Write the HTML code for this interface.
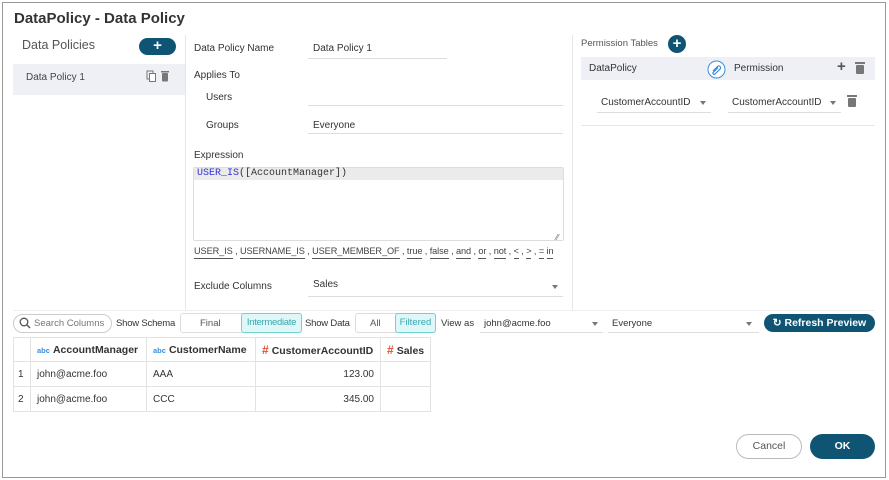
<!DOCTYPE html>
<html><head><style>
*{box-sizing:border-box;margin:0;padding:0}
body{width:889px;height:480px;background:#fff;font-family:"Liberation Sans",sans-serif;color:#333;position:relative;overflow:hidden;font-size:10px}
.a{position:absolute;white-space:nowrap}
.ul{position:absolute;height:1px;background:#ddd}
.btn{position:absolute;background:#0f5573;color:#fff;border-radius:12px;text-align:center;font-weight:bold}
.arr{position:absolute;width:0;height:0;border-left:3.5px solid transparent;border-right:3.5px solid transparent;border-top:4px solid #777}
.kwl{position:absolute;left:194px;top:244px;font-size:9.2px;color:#444;line-height:14px;white-space:nowrap;letter-spacing:-0.1px}
.kwl u{text-decoration:none;border-bottom:1px solid #555;display:inline-block}
table{position:absolute;left:13px;top:337px;border-collapse:collapse;font-size:10px}
td{border:1px solid #e3e3e3;height:25px;padding:0 6px}
th{border:1px solid #e3e3e3;height:24px;padding:0 6px;text-align:left;font-size:10.5px}
.abc{color:#3a8fd8;font-size:7.5px;font-weight:bold;margin-right:3px}
.hash{color:#e8502a;font-weight:bold;font-size:12px;margin-right:3px}
.t{font-size:9.5px}
</style></head><body>
<div class="a" style="left:2px;top:2px;width:884px;height:476px;border:1px solid #999"></div>
<div class="a" style="left:14px;top:10px;font-size:15px;font-weight:bold;color:#333">DataPolicy - Data Policy</div>

<div class="a" style="left:22px;top:38px;font-size:12.5px;color:#555">Data Policies</div>
<div class="btn" style="left:139px;top:38px;width:37px;height:17px;font-size:15px;line-height:16px">+</div>
<div class="a" style="left:13px;top:64px;width:172px;height:31px;background:#eef0f5"></div>
<div class="a" style="left:26px;top:72px;font-size:10px;color:#444">Data Policy 1</div>
<svg class="a" style="left:146px;top:70px" width="26" height="13" viewBox="0 0 26 13"><rect x="1" y="1" width="6" height="8" fill="none" stroke="#777" stroke-width="1"/><rect x="3.5" y="3.5" width="6" height="8" fill="#fff" stroke="#777" stroke-width="1"/><rect x="15" y="1" width="8" height="1.5" fill="#777"/><rect x="16" y="3" width="6" height="8.5" rx="1" fill="#777"/></svg>
<div class="a" style="left:185px;top:35px;width:1px;height:275px;background:#e6e6e6"></div>

<div class="a" style="left:194px;top:43px">Data Policy Name</div>
<div class="a" style="left:313px;top:43px">Data Policy 1</div><div class="ul" style="left:308px;top:58px;width:139px"></div>
<div class="a" style="left:194px;top:70px">Applies To</div>
<div class="a" style="left:206px;top:92px">Users</div><div class="ul" style="left:308px;top:105px;width:255px"></div>
<div class="a" style="left:206px;top:120px">Groups</div>
<div class="a" style="left:313px;top:120px">Everyone</div><div class="ul" style="left:308px;top:133px;width:255px"></div>
<div class="a" style="left:194px;top:150px">Expression</div>
<div class="a" style="left:193px;top:167px;width:371px;height:74px;border:1px solid #ddd;border-radius:2px"></div>
<div class="a" style="left:194px;top:168px;width:369px;height:12px;background:#ebebeb"></div>
<div class="a" style="left:197px;top:168px;font-family:'Liberation Mono',monospace;font-size:10px;color:#333"><span style="color:#3030d0">USER_IS</span>([AccountManager])</div>
<div class="a" style="left:556px;top:233px;font-size:8px;color:#666">⁄⁄</div>
<div class="kwl"><u>USER_IS</u> , <u>USERNAME_IS</u> , <u>USER_MEMBER_OF</u> , <u>true</u> , <u>false</u> , <u>and</u> , <u>or</u> , <u>not</u> , <u>&lt;</u> , <u>&gt;</u> , <u>=</u> <u>in</u></div>
<div class="a" style="left:194px;top:281px">Exclude Columns</div>
<div class="a" style="left:313px;top:279px">Sales</div><div class="arr" style="left:552px;top:285px"></div><div class="ul" style="left:308px;top:296px;width:255px"></div>

<div class="a" style="left:572px;top:35px;width:1px;height:275px;background:#e6e6e6"></div>
<div class="a" style="left:581px;top:38px;font-size:9.5px;color:#555">Permission Tables</div>
<div class="a" style="left:668px;top:35px;width:18px;height:18px;border-radius:50%;background:#0f5573;color:#fff;font-weight:bold;font-size:15px;line-height:17px;text-align:center">+</div>
<div class="a" style="left:581px;top:57px;width:294px;height:23px;background:#eef0f5"></div>
<div class="a" style="left:589px;top:63px">DataPolicy</div>
<svg class="a" style="left:707px;top:60px" width="19" height="19" viewBox="0 0 19 19"><circle cx="9.5" cy="9.5" r="8.5" fill="#fff" stroke="#3a8fd8" stroke-width="1"/><path d="M6 11 L10.5 6.5 a1.8 1.8 0 0 1 2.6 2.6 L8 14 a1.2 1.2 0 0 1 -1.7 -1.7 L11 7.6" fill="none" stroke="#3a8fd8" stroke-width="1.2"/></svg>
<div class="a" style="left:734px;top:63px">Permission</div>
<div class="a" style="left:837px;top:58px;font-size:15px;font-weight:bold;color:#555">+</div>
<svg class="a" style="left:855px;top:62px" width="10" height="12"><rect x="0" y="0" width="10" height="2" fill="#777"/><rect x="1" y="3" width="8" height="9" rx="1" fill="#777"/></svg>
<div class="a" style="left:601px;top:97px">CustomerAccountID</div><div class="arr" style="left:700px;top:101px"></div><div class="ul" style="left:597px;top:112px;width:114px"></div>
<div class="a" style="left:732px;top:97px">CustomerAccountID</div><div class="arr" style="left:830px;top:101px"></div><div class="ul" style="left:728px;top:112px;width:113px"></div>
<svg class="a" style="left:847px;top:95px" width="10" height="12"><rect x="0" y="0" width="10" height="2" fill="#777"/><rect x="1" y="3" width="8" height="9" rx="1" fill="#777"/></svg>
<div class="a" style="left:581px;top:125px;width:294px;height:1px;background:#e6e6e6"></div>

<div class="a" style="left:13px;top:310px;width:862px;height:1px;background:#eee"></div>
<div class="a" style="left:13px;top:314px;width:99px;height:19px;border:1px solid #ccc;border-radius:10px"></div>
<svg class="a" style="left:19px;top:317px" width="12" height="12"><circle cx="5" cy="5" r="3.8" fill="none" stroke="#555" stroke-width="1.3"/><line x1="8" y1="8" x2="11" y2="11" stroke="#555" stroke-width="1.4"/></svg>
<div class="a t" style="left:34px;top:318px;color:#777">Search Columns</div>
<div class="a t" style="left:116px;top:318px;letter-spacing:-0.2px">Show Schema</div>
<div class="a" style="left:180px;top:313px;width:122px;height:20px;border:1px solid #ddd;border-radius:3px"></div>
<div class="a t" style="left:200px;top:318px;color:#555">Final</div>
<div class="a t" style="left:241px;top:313px;width:61px;height:20px;border:1px solid #6fd3d3;background:#e0f7f7;border-radius:3px;color:#36a8b0;text-align:center;line-height:18px;letter-spacing:-0.3px">Intermediate</div>
<div class="a t" style="left:305px;top:318px;letter-spacing:-0.2px">Show Data</div>
<div class="a" style="left:355px;top:313px;width:81px;height:20px;border:1px solid #ddd;border-radius:3px"></div>
<div class="a t" style="left:370px;top:318px;color:#555">All</div>
<div class="a t" style="left:395px;top:313px;width:41px;height:20px;border:1px solid #6fd3d3;background:#e0f7f7;border-radius:3px;color:#36a8b0;text-align:center;line-height:18px">Filtered</div>
<div class="a t" style="left:441px;top:318px">View as</div>
<div class="a t" style="left:484px;top:318px">john@acme.foo</div><div class="arr" style="left:592px;top:322px"></div><div class="ul" style="left:480px;top:332px;width:123px"></div>
<div class="a t" style="left:612px;top:318px">Everyone</div><div class="arr" style="left:746px;top:322px"></div><div class="ul" style="left:608px;top:332px;width:151px"></div>
<div class="btn" style="left:764px;top:314px;width:111px;height:18px;font-size:10.5px;line-height:18px">↻ Refresh Preview</div>

<table>
<tr><th style="width:17px"></th><th style="width:116px"><span class="abc">abc</span>AccountManager</th><th style="width:109px"><span class="abc">abc</span>CustomerName</th><th style="width:125px"><span class="hash">#</span>CustomerAccountID</th><th style="width:50px"><span class="hash">#</span>Sales</th></tr>
<tr><td style="padding:0 4px">1</td><td>john@acme.foo</td><td>AAA</td><td style="text-align:right">123.00</td><td></td></tr>
<tr><td style="padding:0 4px">2</td><td>john@acme.foo</td><td>CCC</td><td style="text-align:right">345.00</td><td></td></tr>
</table>

<div class="a" style="left:736px;top:434px;width:66px;height:25px;border:1px solid #bbb;border-radius:13px;text-align:center;line-height:23px;font-size:10.5px;color:#555">Cancel</div>
<div class="btn" style="left:810px;top:434px;width:65px;height:25px;border-radius:13px;line-height:25px;font-size:10.5px">OK</div>
</body></html>
